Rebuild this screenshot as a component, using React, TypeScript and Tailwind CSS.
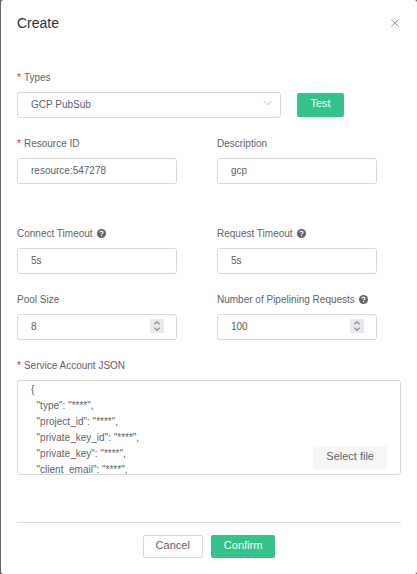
import type { InputHTMLAttributes, ReactNode } from 'react';
import { useState } from 'react';

const control =
  'block w-full rounded-[3px] border border-[#d8d8d8] bg-white pl-[13px] text-[10px] text-[#606266] outline-none focus:border-[#34c388]';

function HelpIcon() {
  return (
    <svg viewBox="0 0 16 16" className="mb-px ml-1 size-[9px] shrink-0" aria-hidden="true">
      <circle cx="8" cy="8" r="8" fill="#606266" />
      <path
        d="M5.2 6.4C5.2 4.6 6.4 3.8 8 3.8s2.8.9 2.8 2.4c0 1.9-2.7 1.8-2.7 3.4"
        fill="none"
        stroke="#fff"
        strokeWidth="2"
      />
      <circle cx="8.1" cy="12" r="1.2" fill="#fff" />
    </svg>
  );
}

type FieldProps = {
  id: string;
  label: string;
  required?: boolean;
  help?: boolean;
  children: ReactNode;
};

function Field({ id, label, required, help, children }: FieldProps) {
  return (
    <div className="min-w-0">
      <label htmlFor={id} className="mb-1.5 flex h-4 items-center text-[10px] leading-4 text-[#606266]">
        {required && <span className="mr-[3px] text-[#f5222d]">*</span>}
        {label}
        {help && <HelpIcon />}
      </label>
      {children}
    </div>
  );
}

function TextInput(props: InputHTMLAttributes<HTMLInputElement>) {
  return <input type="text" {...props} className={`${control} h-[26px] pr-3 pb-0.5`} />;
}

function NumberInput({ id, initial }: { id: string; initial: number }) {
  const [value, setValue] = useState(initial);
  return (
    <div className="relative">
      <input
        id={id}
        type="number"
        value={value}
        onChange={(e) => setValue(Number(e.target.value))}
        className={`${control} h-[26px] pr-8 pb-0.5 [appearance:textfield] [&::-webkit-inner-spin-button]:appearance-none`}
      />
      <svg
        viewBox="0 0 14 14"
        className="pointer-events-none absolute top-[5px] right-[13px] size-3.5"
        aria-hidden="true"
      >
        <rect width="14" height="14" fill="#e9e9ed" />
        <path d="M4.3 5.3 7 2.8l2.7 2.5M4.3 8.7 7 11.2l2.7-2.5" fill="none" stroke="#8f8f9d" strokeWidth="1.4" />
      </svg>
    </div>
  );
}

const json = `{
  "type": "****",
  "project_id": "****",
  "private_key_id": "****",
  "private_key": "****",
  "client_email": "****",
  "client_id": "****"
}`;

export default function App() {
  return (
    <div className="min-h-screen bg-[#666669] pl-px font-['Liberation_Sans',Arial,sans-serif]">
      <div role="dialog" aria-labelledby="title" className="min-h-screen rounded-[3px] bg-white px-4 pt-3.5 pb-4">
        <header className="flex items-center justify-between">
          <h1 id="title" className="text-[14px] leading-[18px] text-[#303133]">
            Create
          </h1>
          <button type="button" aria-label="Close" className="p-0.5">
            <svg viewBox="0 0 8 8" className="size-2" aria-hidden="true">
              <path d="M.3.3l7.4 7.4M7.7.3.3 7.7" stroke="#909399" strokeWidth=".9" />
            </svg>
          </button>
        </header>

        <form className="pt-[38px]" onSubmit={(e) => e.preventDefault()}>
          <div className="flex items-end gap-4 pr-[57px]">
            <div className="min-w-0 flex-1">
              <Field id="types" label="Types" required>
                <div className="relative">
                  <select id="types" className={`${control} h-[26px] appearance-none pr-8 pb-0.5`}>
                    <option>GCP PubSub</option>
                  </select>
                  <svg
                    viewBox="0 0 9 6"
                    className="pointer-events-none absolute top-2 right-[9px] h-1.5 w-[9px]"
                    aria-hidden="true"
                  >
                    <path d="M.5.8l4 4 4-4" fill="none" stroke="#b4b8c0" strokeWidth=".9" />
                  </svg>
                </div>
              </Field>
            </div>
            <button
              type="button"
              className="mb-px h-6 w-[47px] rounded-[2px] bg-[#34c388] pb-1 text-[11px] leading-4 text-white"
            >
              Test
            </button>
          </div>

          <div className="mt-[18px] grid grid-cols-2 gap-x-10 pr-6">
            <Field id="resource" label="Resource ID" required>
              <TextInput id="resource" defaultValue="resource:547278" />
            </Field>
            <Field id="description" label="Description">
              <TextInput id="description" defaultValue="gcp" />
            </Field>
          </div>

          <div className="mt-[42px] grid grid-cols-2 gap-x-10 gap-y-[18px] pr-6">
            <Field id="connect" label="Connect Timeout" help>
              <TextInput id="connect" defaultValue="5s" />
            </Field>
            <Field id="request" label="Request Timeout" help>
              <TextInput id="request" defaultValue="5s" />
            </Field>
            <Field id="pool" label="Pool Size">
              <NumberInput id="pool" initial={8} />
            </Field>
            <Field id="pipelining" label="Number of Pipelining Requests" help>
              <NumberInput id="pipelining" initial={100} />
            </Field>
          </div>

          <div className="mt-[18px]">
            <Field id="account" label="Service Account JSON" required>
              <div className="relative">
                <textarea
                  id="account"
                  defaultValue={json}
                  className={`${control} h-[95px] resize-none overflow-hidden pt-px pr-3 leading-4`}
                />
                <button
                  type="button"
                  className="absolute right-3.5 bottom-1.5 h-[23px] rounded-[2px] bg-[#f6f6f6] px-[13px] pb-1 text-[11px] leading-4 text-[#606266]"
                >
                  Select file
                </button>
              </div>
            </Field>
          </div>

          <footer className="mt-[47px] flex justify-center gap-2 border-t border-[#d8d8d8] pt-3">
            <button
              type="button"
              className="h-[23px] rounded-[2px] border border-[#d8d8d8] px-3 pb-1 text-[11px] leading-4 text-[#606266]"
            >
              Cancel
            </button>
            <button
              type="submit"
              className="h-[23px] rounded-[2px] bg-[#34c388] px-[13px] pb-1 text-[11px] leading-4 text-white"
            >
              Confirm
            </button>
          </footer>
        </form>
      </div>
    </div>
  );
}
